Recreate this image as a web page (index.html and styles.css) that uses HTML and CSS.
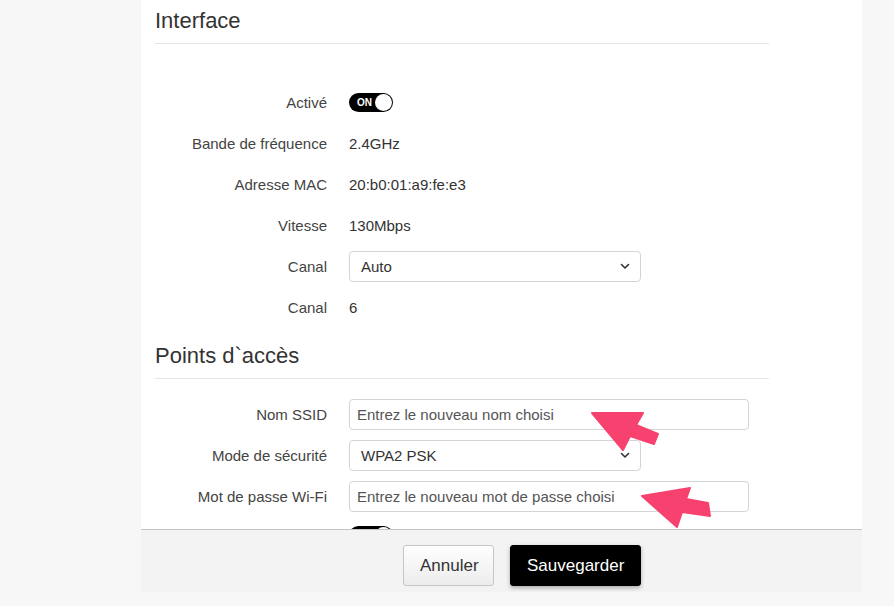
FILE: index.html
```html
<!DOCTYPE html>
<html lang="fr">
<head>
<meta charset="utf-8">
<title>Interface</title>
<link rel="stylesheet" href="styles.css">
</head>
<body>
<div class="page">
  <main class="panel">
    <section class="section section-interface">
      <h2 class="section-title">Interface</h2>
      <div class="rows rows-first">
        <div class="row">
          <span class="label">Activé</span>
          <span class="value">
            <span class="toggle"><span class="toggle-text">ON</span><span class="knob"></span></span>
          </span>
        </div>
        <div class="row">
          <span class="label">Bande de fréquence</span>
          <span class="value">2.4GHz</span>
        </div>
        <div class="row">
          <span class="label">Adresse MAC</span>
          <span class="value">20:b0:01:a9:fe:e3</span>
        </div>
        <div class="row">
          <span class="label">Vitesse</span>
          <span class="value">130Mbps</span>
        </div>
        <div class="row">
          <span class="label">Canal</span>
          <span class="value">
            <span class="select select-auto"><span class="select-text">Auto</span>
              <svg class="chev" width="10" height="7" viewBox="0 0 10 7"><path d="M1.5 1.5 L5 5 L8.5 1.5" fill="none" stroke="#333" stroke-width="1.6" stroke-linecap="round" stroke-linejoin="round"/></svg>
            </span>
          </span>
        </div>
        <div class="row">
          <span class="label">Canal</span>
          <span class="value">6</span>
        </div>
      </div>
    </section>

    <section class="section section-ap">
      <h2 class="section-title">Points d`accès</h2>
      <div class="rows rows-second">
        <div class="row">
          <span class="label">Nom SSID</span>
          <span class="value"><span class="input">Entrez le nouveau nom choisi</span></span>
        </div>
        <div class="row">
          <span class="label">Mode de sécurité</span>
          <span class="value">
            <span class="select select-mode"><span class="select-text">WPA2 PSK</span>
              <svg class="chev" width="10" height="7" viewBox="0 0 10 7"><path d="M1.5 1.5 L5 5 L8.5 1.5" fill="none" stroke="#333" stroke-width="1.6" stroke-linecap="round" stroke-linejoin="round"/></svg>
            </span>
          </span>
        </div>
        <div class="row">
          <span class="label">Mot de passe Wi-Fi</span>
          <span class="value"><span class="input">Entrez le nouveau mot de passe choisi</span></span>
        </div>
        <div class="row row-partial">
          <span class="label"></span>
          <span class="value">
            <span class="toggle"><span class="toggle-text">ON</span><span class="knob"></span></span>
          </span>
        </div>
      </div>
    </section>
  </main>

  <svg class="arrows" width="894" height="606" viewBox="0 0 894 606">
    <polygon points="592,413 643,413 636,425 658,434 654,444 630,436 623,450" fill="#f7416e" stroke="#f7416e" stroke-width="2" stroke-linejoin="round"/>
    <polygon points="642,496 690,488 686,499 708,503 710,516 682,512 677,527" fill="#f7416e" stroke="#f7416e" stroke-width="2" stroke-linejoin="round"/>
  </svg>

  <footer class="footer">
    <button class="btn btn-cancel" type="button">Annuler</button>
    <button class="btn btn-save" type="button">Sauvegarder</button>
  </footer>
</div>
</body>
</html>
```

FILE: styles.css
```css
html, body {
  margin: 0;
  padding: 0;
  height: 100%;
  overflow: hidden;
}

body {
  background: #f7f7f7;
  font-family: "Liberation Sans", Arial, sans-serif;
  color: #333;
}

.page {
  position: relative;
  width: 894px;
  height: 606px;
  overflow: hidden;
}

.panel {
  margin-left: 141px;
  width: 721px;
  height: 592px;
  overflow: hidden;
  background: #fff;
  padding-left: 14px;
  box-sizing: border-box;
}

.section {
  width: 614px;
}

.section-title {
  margin: 0;
  font-size: 22px;
  font-weight: normal;
  line-height: 26px;
  color: #333;
  padding-bottom: 9px;
  border-bottom: 1px solid #e6e6e6;
}

.section-interface .section-title {
  padding-top: 8px;
}

.section-ap .section-title {
  margin-top: 15px;
}

.rows-first {
  margin-top: 38px;
}

.rows-second {
  margin-top: 15px;
}

.row {
  display: flex;
  align-items: center;
  height: 41px;
  font-size: 15px;
}

.row-partial {
  align-items: flex-start;
  padding-top: 9px;
  box-sizing: border-box;
}

.label {
  width: 172px;
  text-align: right;
  color: #444;
  flex: none;
}

.value {
  margin-left: 22px;
  display: flex;
  align-items: center;
  color: #333;
}

.toggle {
  width: 44px;
  height: 19px;
  border-radius: 10px;
  background: #000;
  display: flex;
  align-items: center;
  justify-content: space-between;
  padding: 0 1px 0 8px;
  box-sizing: border-box;
}

.toggle-text {
  color: #fff;
  font-size: 10px;
  font-weight: bold;
  line-height: 1;
}

.knob {
  width: 17px;
  height: 17px;
  border-radius: 50%;
  background: #fff;
}

.select {
  height: 31px;
  border: 1px solid #d4d4d4;
  border-radius: 4px;
  box-sizing: border-box;
  display: flex;
  align-items: center;
  justify-content: space-between;
  padding: 0 10px 0 11px;
  background: #fff;
  color: #333;
}

.select-auto,
.select-mode {
  width: 292px;
}

.chev {
  display: block;
}

.input {
  width: 400px;
  height: 31px;
  border: 1px solid #d4d4d4;
  border-radius: 4px;
  box-sizing: border-box;
  display: flex;
  align-items: center;
  padding-left: 7px;
  color: #555;
  background: #fff;
}

.arrows {
  position: absolute;
  left: 0;
  top: 0;
  pointer-events: none;
}

.footer {
  position: absolute;
  left: 141px;
  top: 529px;
  width: 721px;
  height: 63px;
  box-sizing: border-box;
  background: #f3f3f3;
  border-top: 1px solid #c4c4c4;
  display: flex;
  align-items: flex-start;
  padding-left: 262px;
  padding-top: 15px;
  gap: 16px;
}

.btn {
  font-family: "Liberation Sans", Arial, sans-serif;
  font-size: 17px;
  height: 41px;
  padding: 0 16px;
  border-radius: 3px;
  cursor: pointer;
}

.btn-cancel {
  width: 91px;
  background: linear-gradient(#ffffff, #ececec);
  border: 1px solid #c6c6c6;
  color: #333;
}

.btn-save {
  width: 131px;
  background: #000;
  border: 1px solid #000;
  color: #fff;
  box-shadow: 0 2px 4px rgba(0, 0, 0, 0.3);
}
```
